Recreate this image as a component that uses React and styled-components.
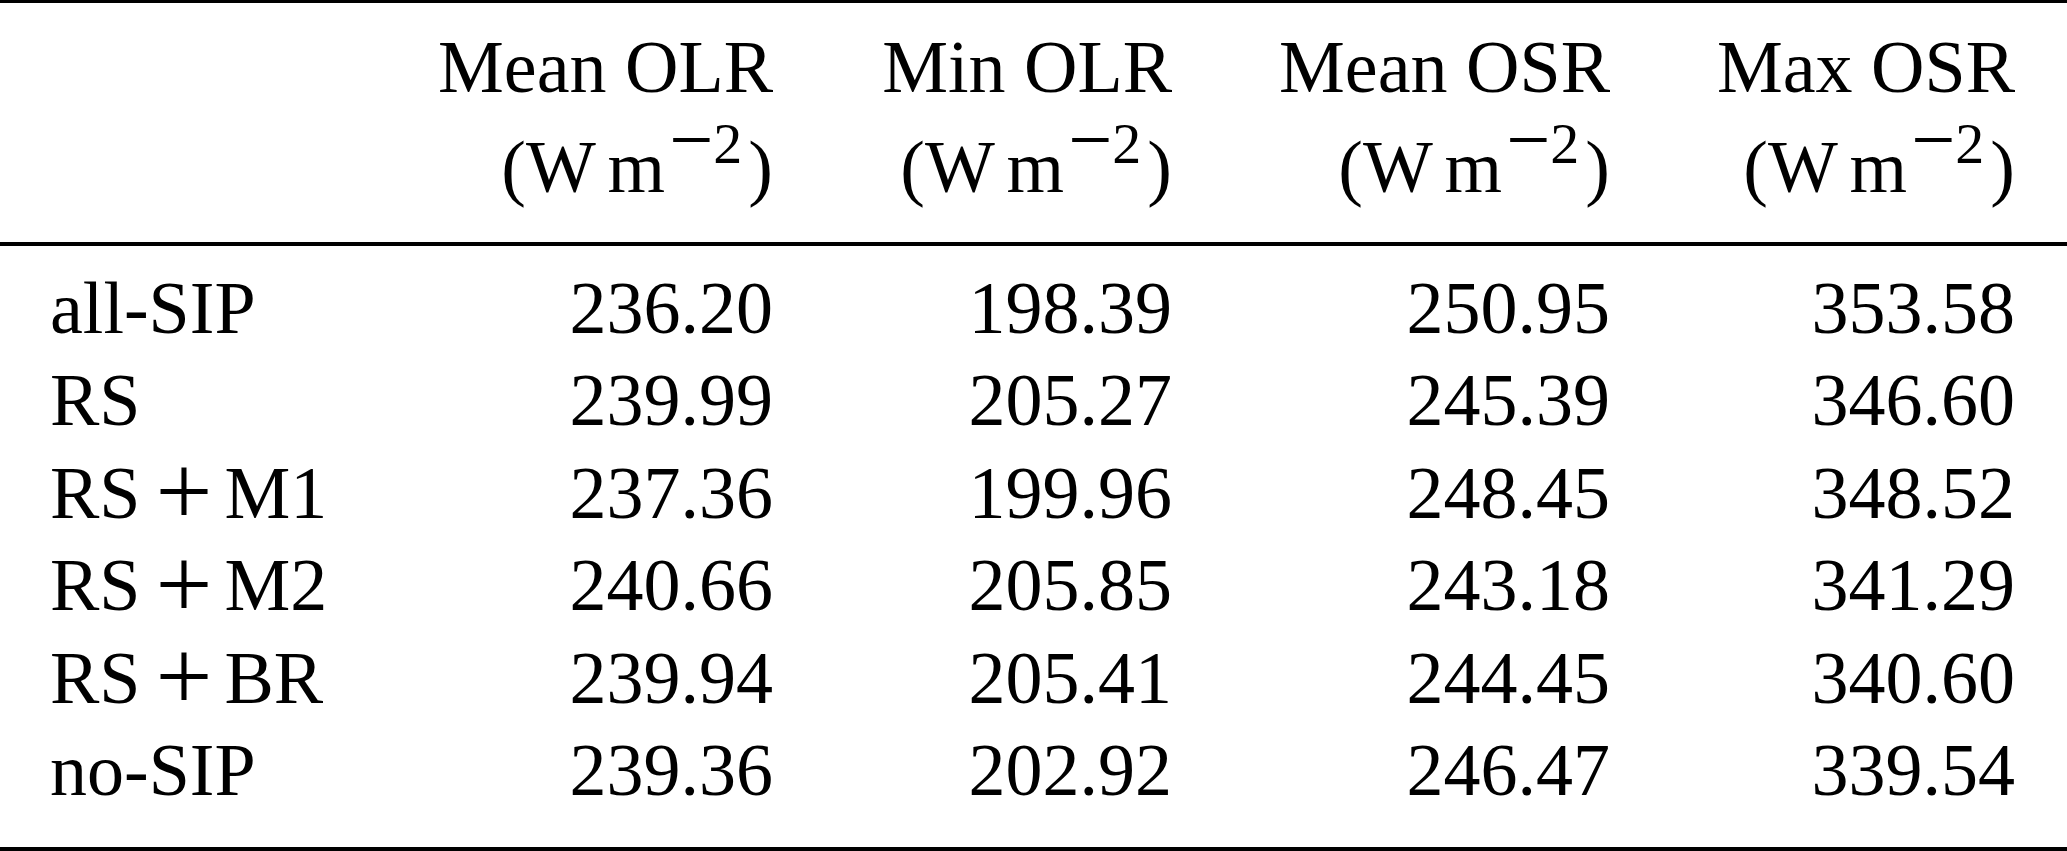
import React from "react";
import styled, { createGlobalStyle } from "styled-components";

const GlobalStyle = createGlobalStyle`
  html, body {
    margin: 0;
    padding: 0;
    background: #fff;
  }
  body {
    font-family: "Liberation Serif", "Times New Roman", serif;
    color: #000;
  }
`;

const columns = ["Mean OLR", "Min OLR", "Mean OSR", "Max OSR"];

const rows = [
  { label: ["all-SIP"], values: ["236.20", "198.39", "250.95", "353.58"] },
  { label: ["RS"], values: ["239.99", "205.27", "245.39", "346.60"] },
  { label: ["RS", "M1"], values: ["237.36", "199.96", "248.45", "348.52"] },
  { label: ["RS", "M2"], values: ["240.66", "205.85", "243.18", "341.29"] },
  { label: ["RS", "BR"], values: ["239.94", "205.41", "244.45", "340.60"] },
  { label: ["no-SIP"], values: ["239.36", "202.92", "246.47", "339.54"] },
];

const Page = styled.div`
  width: 2067px;
  height: 851px;
  overflow: hidden;
  background: #fff;
  display: flex;
  flex-direction: column;
`;

const Rule = styled.div`
  height: ${(p) => p.$thick}px;
  background: #000;
  flex-shrink: 0;
`;

const Grid = styled.div`
  display: grid;
  grid-template-columns: 287px 336px 299px 338px 305px;
  column-gap: 100px;
  padding: ${(p) => p.$top}px 52px ${(p) => p.$bottom}px 50px;
  font-size: 74px;
  line-height: ${(p) => p.$lh}px;
`;

const HeadCell = styled.div`
  display: flex;
  flex-direction: column;
  align-items: flex-end;
  white-space: nowrap;
`;

const Label = styled.div`
  text-align: left;
  white-space: nowrap;
`;

const Value = styled.div`
  text-align: right;
  white-space: nowrap;
`;

const Plus = styled.span`
  font-size: 101px;
  line-height: 0;
  vertical-align: -7.5px;
  margin: 0 12px 0 15px;
`;

const UnitM = styled.span`
  margin-left: 0.16em;
`;

const Sup = styled.span`
  font-size: 58px;
  line-height: 0;
  vertical-align: 29px;
  margin: 0 6px 0 4px;
`;

const Minus = styled.span`
  font-size: 1.35em;
  vertical-align: -3px;
`;

const Unit = () => (
  <span>
    (W<UnitM>m</UnitM>
    <Sup>
      <Minus>−</Minus>2
    </Sup>
    )
  </span>
);

const RowLabel = ({ parts }) =>
  parts.length === 1 ? (
    <Label>{parts[0]}</Label>
  ) : (
    <Label>
      {parts[0]}
      <Plus>+</Plus>
      {parts[1]}
    </Label>
  );

export default function App() {
  return (
    <>
      <GlobalStyle />
      <Page>
        <Rule $thick={3} />
        <Grid $top={14} $bottom={25} $lh={100}>
          <div />
          {columns.map((c) => (
            <HeadCell key={c}>
              <span>{c}</span>
              <Unit />
            </HeadCell>
          ))}
        </Grid>
        <Rule $thick={4} />
        <Grid $top={16} $bottom={31} $lh={92.4}>
          {rows.map((r) => (
            <React.Fragment key={r.label.join("+")}>
              <RowLabel parts={r.label} />
              {r.values.map((v, i) => (
                <Value key={i}>{v}</Value>
              ))}
            </React.Fragment>
          ))}
        </Grid>
        <Rule $thick={4} />
      </Page>
    </>
  );
}
